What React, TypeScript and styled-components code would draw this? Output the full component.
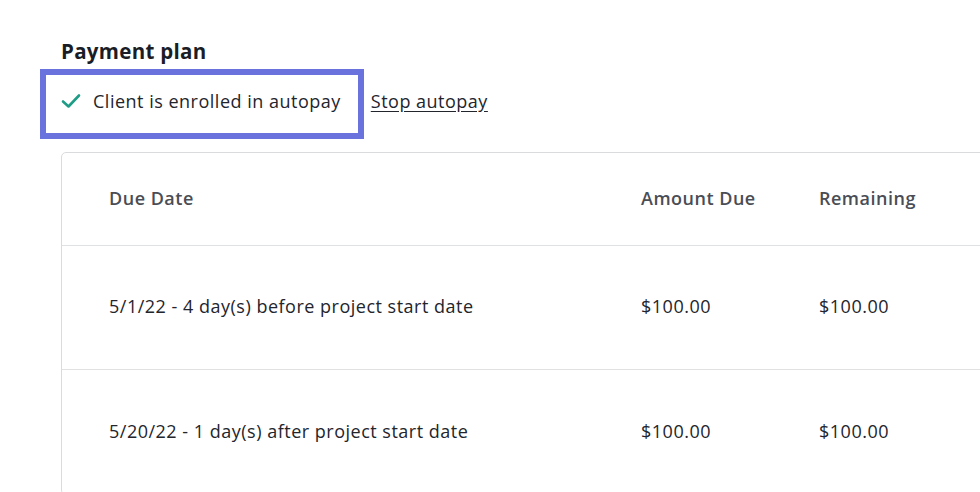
import styled, { createGlobalStyle } from "styled-components";

const GlobalStyle = createGlobalStyle`
  html, body {
    margin: 0;
    padding: 0;
    background: #ffffff;
  }
  body {
    font-family: "Open Sans", "Lato", sans-serif;
    color: #1f2129;
  }
`;

const Page = styled.div`
  width: 980px;
  height: 492px;
  overflow: hidden;
  padding: 38px 0 0 61px;
  box-sizing: border-box;
`;

const Title = styled.h2`
  margin: 0;
  font-size: 20.5px;
  font-weight: 700;
  letter-spacing: 0.3px;
  line-height: 26px;
  color: #1b1d26;
`;

const StatusRow = styled.div`
  display: flex;
  align-items: center;
  margin: 5px 0 0 -21px;
  font-size: 18px;
  letter-spacing: 0.5px;
  color: #23252d;
`;

const FocusBox = styled.div`
  display: flex;
  align-items: center;
  gap: 12px;
  height: 70px;
  box-sizing: border-box;
  padding: 0 17px 6px 15px;
  border: 6px solid #6a72de;
`;

const StopLink = styled.a`
  margin-left: 7px;
  margin-bottom: 6px;
  text-decoration: underline;
  text-underline-offset: 3px;
  cursor: pointer;
`;

const Table = styled.div`
  margin-top: 13px;
  width: 960px;
  border: 1px solid #d9dbdd;
  border-radius: 5px;
  box-sizing: border-box;
`;

const Row = styled.div<{ $height: number; $header?: boolean }>`
  display: grid;
  grid-template-columns: 532px 178px 1fr;
  align-items: center;
  height: ${(p) => p.$height}px;
  padding-left: 47px;
  padding-bottom: 3px;
  box-sizing: border-box;
  font-size: 18px;
  letter-spacing: 0.5px;
  font-weight: ${(p) => (p.$header ? 600 : 400)};
  color: ${(p) => (p.$header ? "#4a4d55" : "#23252d")};
  border-bottom: 1px solid #dfe1e3;
  &:last-child {
    border-bottom: none;
  }
`;

const Check = () => (
  <svg width="20" height="16" viewBox="0 0 20 16" fill="none">
    <path
      d="M2 8.5 L7.5 13.5 L18 2.5"
      stroke="#1e9c85"
      strokeWidth="2.6"
      strokeLinecap="round"
      strokeLinejoin="round"
    />
  </svg>
);

const payments = [
  { due: "5/1/22 - 4 day(s) before project start date", amount: "$100.00", remaining: "$100.00" },
  { due: "5/20/22 - 1 day(s) after project start date", amount: "$100.00", remaining: "$100.00" },
];

export default function App() {
  return (
    <>
      <GlobalStyle />
      <Page>
        <Title>Payment plan</Title>
        <StatusRow>
          <FocusBox>
            <Check />
            <span>Client is enrolled in autopay</span>
          </FocusBox>
          <StopLink>Stop autopay</StopLink>
        </StatusRow>
        <Table>
          <Row $height={93} $header>
            <span>Due Date</span>
            <span>Amount Due</span>
            <span>Remaining</span>
          </Row>
          {payments.map((p) => (
            <Row key={p.due} $height={124}>
              <span>{p.due}</span>
              <span>{p.amount}</span>
              <span>{p.remaining}</span>
            </Row>
          ))}
        </Table>
      </Page>
    </>
  );
}
